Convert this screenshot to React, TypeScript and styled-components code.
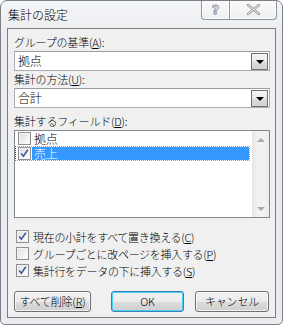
import React from "react"
import styled, { createGlobalStyle } from "styled-components"

const GlobalStyle = createGlobalStyle`
  html, body {
    margin: 0;
    padding: 0;
    background: #ffffff;
  }
  body {
    font-family: "Noto Sans CJK JP", "Noto Sans", sans-serif;
    font-size: 11px;
    font-weight: 300;
    letter-spacing: -0.2px;
    color: #000;
  }
`

const fields = [
  { name: "拠点", checked: false, selected: false },
  { name: "売上", checked: true, selected: true },
]

const options = [
  { text: "現在の小計をすべて置き換える", key: "C", checked: true },
  { text: "グループごとに改ページを挿入する", key: "P", checked: false },
  { text: "集計行をデータの下に挿入する", key: "S", checked: true },
]

const CheckBox = ({ checked }: { checked: boolean }) => (
  <Box>
    {checked && (
      <svg width="11" height="11" viewBox="0 0 11 11">
        <path d="M2.2 5.6 L4.4 8.2 L8.8 1.8" fill="none" stroke="#3d5aa0" strokeWidth="1.6" />
      </svg>
    )}
  </Box>
)

const App: React.FC = () => {
  return (
    <>
      <GlobalStyle />
      <Window>
        <TitleBar>
          <Title>集計の設定</Title>
          <CaptionButtons>
            <CaptionButton $w={29} $left>
              <HelpGlyph>?</HelpGlyph>
            </CaptionButton>
            <CaptionButton $w={47}>
              <svg width="13" height="11" viewBox="0 0 13 11">
                <path
                  d="M1 1 L12 10 M12 1 L1 10"
                  stroke="#9a9a9a"
                  strokeWidth="2.6"
                  strokeLinecap="square"
                />
                <path d="M1 1 L12 10 M12 1 L1 10" stroke="#f4f4f4" strokeWidth="1" />
              </svg>
            </CaptionButton>
          </CaptionButtons>
        </TitleBar>
        <Client>
          <Label>
            グループの基準(<u>A</u>):
          </Label>
          <Combo>
            <ComboText>拠点</ComboText>
            <DropButton>
              <Arrow />
            </DropButton>
          </Combo>
          <Label $top={1}>
            集計の方法(<u>U</u>):
          </Label>
          <Combo>
            <ComboText>合計</ComboText>
            <DropButton>
              <Arrow />
            </DropButton>
          </Combo>
          <Label $top={6}>
            集計するフィールド(<u>D</u>):
          </Label>
          <ListBox>
            <Items>
              {fields.map(f => (
                <Item key={f.name} $selected={f.selected}>
                  <CheckBox checked={f.checked} />
                  <ItemText $selected={f.selected}>{f.name}</ItemText>
                </Item>
              ))}
            </Items>
            <ScrollBar>
              <ScrollArrow $up />
              <ScrollArrow />
            </ScrollBar>
          </ListBox>
          <Options>
            {options.map(o => (
              <OptionRow key={o.key}>
                <CheckBox checked={o.checked} />
                <span>
                  {o.text}(<u>{o.key}</u>)
                </span>
              </OptionRow>
            ))}
          </Options>
          <ButtonRow>
            <Button $w={77}>
              すべて削除(<u>R</u>)
            </Button>
            <Button $w={73} $default>
              OK
            </Button>
            <Button $w={74}>キャンセル</Button>
          </ButtonRow>
        </Client>
      </Window>
    </>
  )
}

const Window = styled.div`
  box-sizing: border-box;
  width: 283px;
  height: 325px;
  border: 1px solid #7b7f86;
  border-radius: 7px 7px 5px 5px;
  background: linear-gradient(#f4f5f7, #e9ebee 40px, #e9ebee);
  display: flex;
  flex-direction: column;
  overflow: hidden;
`

const TitleBar = styled.div`
  height: 27px;
  display: flex;
  justify-content: space-between;
  align-items: flex-start;
  flex-shrink: 0;
`

const Title = styled.div`
  padding: 6px 0 0 7px;
  font-size: 12px;
  line-height: 16px;
  letter-spacing: 0;
  color: #000;
`

const CaptionButtons = styled.div`
  display: flex;
  margin: -1px 5px 0 0;
`

const CaptionButton = styled.div<{ $w: number; $left?: boolean }>`
  box-sizing: border-box;
  width: ${p => p.$w}px;
  height: 20px;
  border: 1px solid #8d939b;
  border-top: none;
  border-left: ${p => (p.$left ? "1px solid #8d939b" : "none")};
  border-radius: ${p => (p.$left ? "0 0 0 4px" : "0 0 4px 0")};
  background: linear-gradient(#fbfbfc, #eceef1);
  box-shadow: inset 0 0 0 1px rgba(255, 255, 255, 0.8);
  display: flex;
  align-items: center;
  justify-content: center;
`

const HelpGlyph = styled.span`
  font-family: "DejaVu Sans", sans-serif;
  font-weight: bold;
  font-size: 13px;
  line-height: 13px;
  color: #f4f4f4;
  -webkit-text-stroke: 0.8px #8e8e8e;
`

const Client = styled.div`
  flex: 1;
  margin: 0 6px 6px 6px;
  border: 1px solid #7d7d7d;
  background: #f0f0f0;
  padding: 6px 5px 0 6px;
  display: flex;
  flex-direction: column;
`

const Label = styled.div<{ $top?: number }>`
  height: 15px;
  line-height: 15px;
  margin-top: ${p => p.$top ?? 0}px;
  margin-bottom: 1px;
  white-space: nowrap;
`

const Combo = styled.div`
  box-sizing: border-box;
  height: 20px;
  border: 1px solid #abadb3;
  border-top-color: #9a9ca3;
  background: #fff;
  display: flex;
  align-items: center;
`

const ComboText = styled.div`
  flex: 1;
  padding-left: 3px;
  line-height: 16px;
  font-size: 12px;
`

const DropButton = styled.div`
  box-sizing: border-box;
  width: 17px;
  height: 17px;
  margin-right: 1px;
  border: 1px solid #707070;
  background: linear-gradient(#f6f6f6, #e8e8e8 50%, #dcdcdc 51%, #d2d2d2);
  display: flex;
  align-items: center;
  justify-content: center;
`

const Arrow = styled.div`
  width: 0;
  height: 0;
  border-left: 4px solid transparent;
  border-right: 4px solid transparent;
  border-top: 4px solid #000;
  margin-top: 1px;
`

const ListBox = styled.div`
  box-sizing: border-box;
  height: 88px;
  border: 1px solid #828790;
  background: #fff;
  display: flex;
`

const Items = styled.div`
  flex: 1;
`

const Item = styled.div<{ $selected?: boolean }>`
  box-sizing: border-box;
  height: 15px;
  display: flex;
  align-items: center;
  padding-left: 2px;
  margin-right: 1px;
  border: 1px ${p => (p.$selected ? "dotted #e8902c" : "solid transparent")};
  border-left-color: ${p => (p.$selected ? "#333" : "transparent")};
`

const ItemText = styled.span<{ $selected?: boolean }>`
  flex: 1;
  height: 13px;
  line-height: 13px;
  margin-left: 1px;
  padding-left: 2px;
  font-size: 12px;
  background: ${p => (p.$selected ? "#3399ff" : "transparent")};
  color: ${p => (p.$selected ? "#fff" : "#000")};
`

const Box = styled.span`
  box-sizing: border-box;
  flex-shrink: 0;
  width: 13px;
  height: 13px;
  border: 1px solid #8e8f8f;
  background: linear-gradient(135deg, #dcdcdc, #f6f6f6 70%, #ffffff);
  box-shadow: inset 0 0 0 1px #f4f4f4;
  display: flex;
  align-items: center;
  justify-content: center;
`

const ScrollBar = styled.div`
  width: 17px;
  margin: 0 0 0 1px;
  background: linear-gradient(90deg, #e8e8e8, #f2f2f2 30%, #f2f2f2 70%, #ececec);
  border-left: 1px solid #e6e6e6;
  display: flex;
  flex-direction: column;
  justify-content: space-between;
  align-items: center;
  padding: 7px 0 6px;
  box-sizing: border-box;
`

const ScrollArrow = styled.div<{ $up?: boolean }>`
  width: 0;
  height: 0;
  border-left: 4px solid transparent;
  border-right: 4px solid transparent;
  ${p => (p.$up ? "border-bottom: 4px solid #a8a8a8;" : "border-top: 4px solid #a8a8a8;")}
`

const Options = styled.div`
  margin-top: 10px;
  padding-left: 2px;
  display: flex;
  flex-direction: column;
`

const OptionRow = styled.div`
  height: 17px;
  display: flex;
  align-items: center;
  gap: 4px;
  white-space: nowrap;
  font-size: 11px;
  letter-spacing: -0.3px;
`

const ButtonRow = styled.div`
  margin-top: 12px;
  display: flex;
  & > :nth-child(1) {
    margin-right: 20px;
  }
  & > :nth-child(2) {
    margin-right: 11px;
  }
`

const Button = styled.div<{ $w: number; $default?: boolean }>`
  box-sizing: border-box;
  width: ${p => p.$w}px;
  height: 21px;
  border: 1px solid ${p => (p.$default ? "#3c7fb1" : "#707070")};
  border-radius: 3px;
  background: linear-gradient(#f2f2f2, #ebebeb 50%, #dddddd 51%, #cfcfcf);
  box-shadow: inset 0 0 0 1px ${p => (p.$default ? "#48d0f8" : "rgba(255, 255, 255, 0.7)")};
  display: flex;
  align-items: center;
  justify-content: center;
  white-space: nowrap;
  line-height: 15px;
`

export default App
